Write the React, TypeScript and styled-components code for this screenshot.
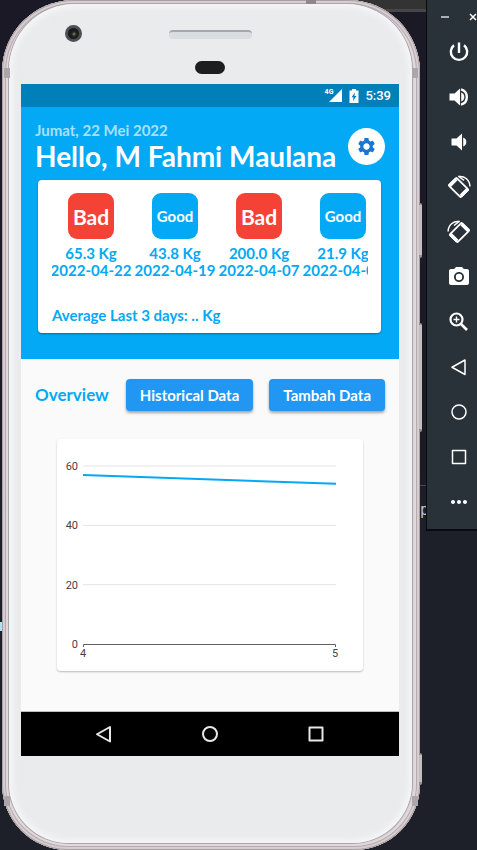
import React from "react";
import styled, { createGlobalStyle } from "styled-components";
import { MdPhotoCamera, MdSettings, MdMoreHoriz } from "react-icons/md";

const GlobalStyle = createGlobalStyle`
  * { box-sizing: border-box; }
  body { margin: 0; background: #1c1e28; font-family: Lato, "Open Sans", sans-serif; }
  button { font: inherit; border: 0; padding: 0; background: none; cursor: pointer; }
  p, h1, h2 { margin: 0; }
`;

const Desktop = styled.div`
  position: relative;
  display: flex;
  align-items: flex-start;
  min-height: 100vh;
  padding-left: 2px;
  overflow: hidden;
  background: linear-gradient(#1b1926 0, #1b1b26 56%, #1d2029 60%, #1d2028 100%);
`;

const WindowEdge = styled.div`
  position: absolute;
  top: 0;
  right: 51px;
  width: 70px;
  height: 12px;
  background: #333333;
  border-bottom: 3px solid #464646;
`;

const EditorLine = styled.div`
  position: absolute;
  top: 485px;
  right: 51px;
  width: 12px;
  height: 1px;
  background: #4c3a8c;
`;

const EditorText = styled.span`
  position: absolute;
  top: 500px;
  right: 48px;
  font: 15px/20px "DejaVu Sans Mono", monospace;
  color: #b9c4d8;
`;

const EditorCursor = styled.div`
  position: absolute;
  top: 622px;
  left: 0;
  width: 2px;
  height: 9px;
  background: #a6e4f7;
`;

const Phone = styled.main`
  position: relative;
  display: flex;
  flex: 1;
  min-width: 0;
  min-height: 100vh;
  margin-right: 6px;
  padding: 4px 8px 7px 7px;
  border-radius: 72px 72px 66px 66px;
  background: #d8d0d3;
  box-shadow: inset 0 0 0 1px #aaa1a5, inset 0 0 0 3px #d6cdd0, inset 0 0 0 4px #b5abaf,
    inset 0 0 0 6px #e0d8db;
`;

const SideKey = styled.span<{ $top: number; $size: number }>`
  position: absolute;
  top: ${(p) => p.$top}px;
  right: -2px;
  width: 3px;
  height: ${(p) => p.$size}px;
  border-radius: 0 2px 2px 0;
  background: #bfc0bd;
  border-top: 2px solid #92938f;
  border-bottom: 3px solid #92938f;
`;

const Antenna = styled.span<{ $side: "left" | "right"; $top: number }>`
  position: absolute;
  top: ${(p) => p.$top}px;
  ${(p) => p.$side}: 2px;
  width: 6px;
  height: 10px;
  background: #aca5a9;
`;

const TopAntenna = styled.span`
  position: absolute;
  top: 0;
  right: 104px;
  width: 10px;
  height: 4px;
  background: #8e888d;
`;

const Body = styled.div`
  display: flex;
  flex-direction: column;
  flex: 1;
  min-width: 0;
  padding: 0 13px 0 12px;
  border-radius: 66px 66px 60px 60px;
  background: #e9ebed;
  box-shadow: 0 0 0 1px #aaa3a7, inset 0 0 6px 3px #f7f7f9;
`;

const TopBezel = styled.div`
  position: relative;
  display: flex;
  flex-direction: column;
  align-items: center;
  height: 80px;
  padding-top: 26px;
`;

const Camera = styled.span`
  position: absolute;
  left: 44px;
  top: 21px;
  width: 17px;
  height: 17px;
  border-radius: 50%;
  border: 3px solid #4d4e53;
  background: radial-gradient(circle at 55% 55%, #69702f 0 1px, #25262a 2px, #16171a 5px);
`;

const Speaker = styled.span`
  width: 83px;
  height: 9px;
  border-radius: 4px;
  background: #d9dce0;
  border-top: 2px solid #a3a7b0;
`;

const Sensor = styled.span`
  width: 30px;
  height: 13px;
  margin-top: 22px;
  border-radius: 7px;
  background: #1c1e20;
`;

const Screen = styled.div`
  display: flex;
  flex-direction: column;
  flex: 1;
  margin-bottom: 87px;
  background: #fafafa;
`;

const StatusBar = styled.div`
  display: flex;
  justify-content: flex-end;
  align-items: center;
  height: 23px;
  padding-right: 8px;
  background: #007fb8;
  color: #fff;
  font: 500 13px/23px Roboto, sans-serif;
`;

const Network = styled.span`
  display: flex;
  align-items: flex-start;
  height: 13px;
  margin-right: 7px;
  font: 700 7px/7px Roboto, sans-serif;
  svg { margin-left: -4px; }
`;

const BatterySvg = styled.svg`
  margin-right: 6px;
`;

const Hero = styled.header`
  padding: 13px 14px 26px;
  background: #03a9f4;
`;

const Greeting = styled.div`
  display: flex;
  justify-content: space-between;
  align-items: center;
  height: 52px;
`;

const Today = styled.p`
  font-size: 15px;
  line-height: 20px;
  font-weight: 700;
  color: #a8e0fb;
`;

const Hello = styled.h1`
  font-size: 28px;
  line-height: 32px;
  font-weight: 700;
  color: #fff;
  white-space: nowrap;
`;

const SettingsButton = styled.button`
  display: grid;
  place-items: center;
  flex: none;
  width: 37px;
  height: 37px;
  border-radius: 50%;
  background: #fff;
  && { color: #1976d2; }
`;

const SummaryCard = styled.section`
  margin: 8px 4px 0 3px;
  padding: 13px 13px 9px 14px;
  border-radius: 4px;
  background: #fff;
  color: #03a9f4;
  font-size: 15px;
  line-height: 17px;
  font-weight: 700;
  box-shadow: 0 1px 2px rgba(0, 0, 0, 0.35);
`;

const Records = styled.ul`
  display: flex;
  gap: 6px;
  margin: 0 0 28px;
  padding: 0;
  overflow: hidden;
  list-style: none;
`;

const Record = styled.li`
  display: flex;
  flex-direction: column;
  align-items: center;
  flex: none;
  width: 78px;
  white-space: nowrap;
`;

const Grade = styled.span<{ $bad: boolean }>`
  display: grid;
  place-items: center;
  width: 46px;
  height: 46px;
  margin-bottom: 6px;
  border-radius: 9px;
  background: ${(p) => (p.$bad ? "#f44336" : "#03a9f4")};
  color: #fff;
  font-size: ${(p) => (p.$bad ? 21 : 15)}px;
`;

const Toolbar = styled.div`
  display: flex;
  align-items: center;
  padding: 20px 14px 0;
`;

const Overview = styled.h2`
  flex: 1;
  color: #03a9f4;
  font-size: 17px;
  line-height: 32px;
  font-weight: 700;
`;

const Action = styled.button`
  && {
    height: 32px;
    margin-left: 16px;
    padding: 0 14px;
    border-radius: 4px;
    background: #2196f3;
    color: #fff;
    font-size: 15px;
    font-weight: 700;
    white-space: nowrap;
    box-shadow: 0 2px 3px rgba(0, 0, 0, 0.35);
  }
`;

const ChartCard = styled.section`
  margin: 28px 36px 40px;
  border-radius: 4px;
  background: #fff;
  box-shadow: 0 1px 2px rgba(0, 0, 0, 0.25);
  svg { display: block; width: 100%; height: auto; }
  text { font: 11px Roboto, sans-serif; fill: #444; }
`;

const NavBar = styled.nav`
  display: flex;
  justify-content: center;
  align-items: center;
  gap: 82px;
  height: 45px;
  margin-top: auto;
  border-top: 1px solid #bdbdbd;
  background: #000;
  color: #e8e8e8;
`;

const IconButton = styled.button`
  display: grid;
  place-items: center;
  && { color: inherit; }
`;

const EmulatorPanel = styled.aside`
  position: relative;
  display: flex;
  flex-direction: column;
  flex: none;
  width: 51px;
  padding-bottom: 15px;
  border: solid #080b0d;
  border-width: 0 0 2px 1px;
  background: #283238;
  color: #fff;
`;

const WindowButtons = styled.div`
  display: flex;
  justify-content: space-between;
  height: 40px;
  padding: 12px 0 18px 14px;
`;

const Tools = styled.div`
  display: flex;
  flex-direction: column;
  align-items: center;
  gap: 21px;
  padding-left: 14px;
`;

type Shape = "back" | "home" | "recent";

function NavIcon({ shape, thick = 2 }: { shape: Shape; thick?: number }) {
  return (
    <svg width="24" height="24" viewBox="0 0 24 24" fill="none" stroke="currentColor" strokeWidth={thick} strokeLinejoin="round">
      {shape === "back" && <path d="M18 5v14.500L5 12.250z" />}
      {shape === "home" && <circle cx="12" cy="12" r="7" />}
      {shape === "recent" && <rect x="5.500" y="5.500" width="13" height="13" />}
    </svg>
  );
}

function PowerIcon() {
  return (
    <svg width="24" height="24" viewBox="0 0 24 24" fill="none" stroke="#fff" strokeWidth="2.400">
      <path d="M12 2.500v10.500M7 5.200a8.200 8.200 0 1 0 10 0" />
    </svg>
  );
}

function ZoomIcon() {
  return (
    <svg width="24" height="24" viewBox="0 0 24 24" fill="none" stroke="#fff">
      <circle cx="9.500" cy="9.500" r="6" strokeWidth="2.200" />
      <path d="M14 14l6 6" strokeWidth="2.600" />
      <path d="M6.500 9.500h6M9.500 6.500v6" strokeWidth="1.400" />
    </svg>
  );
}

function RotateIcon({ mirrored = false }: { mirrored?: boolean }) {
  return (
    <svg width="24" height="24" viewBox="0 0 24 24" fill="none" stroke="#fff">
      <g transform={mirrored ? "matrix(-1 0 0 1 24 0)" : undefined}>
        <rect x="6" y="4" width="11" height="17" rx="1" strokeWidth="1.800" transform="rotate(-45 11.500 12.500)" />
        <path d="M2.200 11.300l7.200-7.200M13.800 21l7.200-7.200" strokeWidth="3.400" />
        <path d="M11.500 1.600C17.500.6 22.900 5 22.900 11.500" strokeWidth="1.500" />
        <path d="M11.500 1.200l5.500 4.300" strokeWidth="1.500" />
      </g>
    </svg>
  );
}

function VolumeIcon({ loud = false }: { loud?: boolean }) {
  return (
    <svg width="24" height="24" viewBox="0 0 24 24" fill="#fff">
      <g transform={loud ? undefined : "translate(2 0)"}>
        <path d="M2.500 8.500h5L13 3.500v17l-5.500-5h-5z" />
        <path d="M14.200 7.500a4.800 4.800 0 0 1 0 9z" />
      </g>
      {loud && <path d="M14 4.300a8 8 0 0 1 0 15.400" fill="none" stroke="#fff" strokeWidth="2.400" />}
    </svg>
  );
}

function BatteryIcon() {
  return (
    <BatterySvg width="10" height="14" viewBox="0 0 10 14">
      <path d="M3 0h4v1.500h2.500V14h-9V1.500H3z" fill="#fff" />
      <path d="M6 3.500L2.500 8.200h2L4 12l3.500-5h-2z" fill="#007fb8" />
    </BatterySvg>
  );
}

const tools: { label: string; icon: React.ReactNode }[] = [
  { label: "Power", icon: <PowerIcon /> },
  { label: "Volume up", icon: <VolumeIcon loud /> },
  { label: "Volume down", icon: <VolumeIcon /> },
  { label: "Rotate left", icon: <RotateIcon /> },
  { label: "Rotate right", icon: <RotateIcon mirrored /> },
  { label: "Take screenshot", icon: <MdPhotoCamera size={24} /> },
  { label: "Zoom", icon: <ZoomIcon /> },
  { label: "Back", icon: <NavIcon shape="back" thick={1.5} /> },
  { label: "Home", icon: <NavIcon shape="home" thick={1.5} /> },
  { label: "Recent apps", icon: <NavIcon shape="recent" thick={1.5} /> },
  { label: "More", icon: <MdMoreHoriz size={24} /> },
];

const records = [
  { grade: "Bad", weight: "65.3 Kg", date: "2022-04-22" },
  { grade: "Good", weight: "43.8 Kg", date: "2022-04-19" },
  { grade: "Bad", weight: "200.0 Kg", date: "2022-04-07" },
  { grade: "Good", weight: "21.9 Kg", date: "2022-04-06" },
];

const scaleY = (value: number) => 205 - (value * 178) / 60;

function WeightChart() {
  return (
    <svg viewBox="0 0 306 232" role="img" aria-label="Weight by month">
      {[60, 40, 20].map((v) => (
        <path key={v} d={`M26 ${scaleY(v)}H279`} stroke="#e4e4e4" />
      ))}
      {[60, 40, 20, 0].map((v) => (
        <text key={v} x="21" y={scaleY(v) + 4} textAnchor="end">{v}</text>
      ))}
      <path d="M26.500 208V205.500H278.500V208" fill="none" stroke="#616161" />
      <text x="26" y="218" textAnchor="middle">4</text>
      <text x="278" y="218" textAnchor="middle">5</text>
      <path d={`M26 ${scaleY(57)}L279 ${scaleY(54)}`} stroke="#03a9f4" strokeWidth="2" />
    </svg>
  );
}

export default function App() {
  return (
    <>
      <GlobalStyle />
      <Desktop>
        <WindowEdge />
        <EditorLine />
        <EditorText>p</EditorText>
        <EditorCursor />
        <Phone>
          <SideKey $top={203} $size={55} />
          <SideKey $top={323} $size={109} />
          <SideKey $top={753} $size={32} />
          <TopAntenna />
          <Antenna $side="left" $top={68} />
          <Antenna $side="right" $top={68} />
          <Antenna $side="left" $top={796} />
          <Antenna $side="right" $top={796} />
          <Body>
            <TopBezel>
              <Camera />
              <Speaker />
              <Sensor />
            </TopBezel>
            <Screen>
              <StatusBar>
                <Network>
                  4G
                  <svg width="13" height="13" viewBox="0 0 13 13"><path d="M13 0v13H0z" fill="#fff" /></svg>
                </Network>
                <BatteryIcon />
                5:39
              </StatusBar>
              <Hero>
                <Greeting>
                  <div>
                    <Today>Jumat, 22 Mei 2022</Today>
                    <Hello>Hello, M Fahmi Maulana</Hello>
                  </div>
                  <SettingsButton aria-label="Settings"><MdSettings size={21} /></SettingsButton>
                </Greeting>
                <SummaryCard>
                  <Records>
                    {records.map((r) => (
                      <Record key={r.date}>
                        <Grade $bad={r.grade === "Bad"}>{r.grade}</Grade>
                        <span>{r.weight}</span>
                        <span>{r.date}</span>
                      </Record>
                    ))}
                  </Records>
                  <p>Average Last 3 days: .. Kg</p>
                </SummaryCard>
              </Hero>
              <Toolbar>
                <Overview>Overview</Overview>
                <Action>Historical Data</Action>
                <Action>Tambah Data</Action>
              </Toolbar>
              <ChartCard><WeightChart /></ChartCard>
              <NavBar>
                <IconButton aria-label="Back"><NavIcon shape="back" /></IconButton>
                <IconButton aria-label="Home"><NavIcon shape="home" /></IconButton>
                <IconButton aria-label="Recent apps"><NavIcon shape="recent" /></IconButton>
              </NavBar>
            </Screen>
          </Body>
        </Phone>
        <EmulatorPanel>
          <WindowButtons>
            <IconButton aria-label="Minimize">
              <svg width="8" height="10" viewBox="0 0 8 10"><path d="M0 5h8" stroke="#aab0b3" strokeWidth="2" /></svg>
            </IconButton>
            <IconButton aria-label="Close">
              <svg width="8" height="10" viewBox="0 0 8 10"><path d="M1 2l6 6M7 2L1 8" stroke="#fff" strokeWidth="1.500" /></svg>
            </IconButton>
          </WindowButtons>
          <Tools>
            {tools.map((t) => (
              <IconButton key={t.label} aria-label={t.label}>{t.icon}</IconButton>
            ))}
          </Tools>
        </EmulatorPanel>
      </Desktop>
    </>
  );
}
